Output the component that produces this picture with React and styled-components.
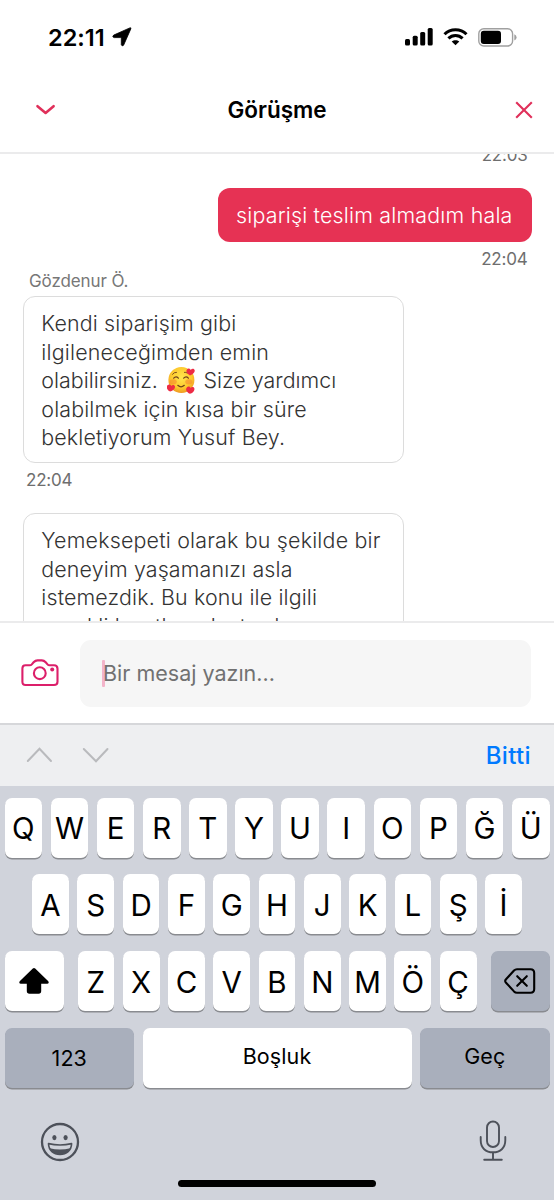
import React from 'react'
import styled, { createGlobalStyle } from 'styled-components'

const GlobalStyle = createGlobalStyle`
  * { box-sizing: border-box; }
  body {
    margin: 0;
    background: #fff;
    font-family: Inter, "Liberation Sans", sans-serif;
    font-feature-settings: "calt" 0;
  }
`

const Screen = styled.div`
  display: flex;
  flex-direction: column;
  width: 554px;
  height: 1200px;
  overflow: hidden;
  background: #fff;
`

const StatusBar = styled.div`
  display: flex;
  align-items: center;
  justify-content: space-between;
  height: 74px;
  padding: 0 37px 0 48px;
  flex: none;
`

const Clock = styled.div`
  display: flex;
  align-items: center;
  gap: 7.5px;
  font-size: 23.5px;
  font-weight: 600;
  letter-spacing: 0;
  color: #000;
`

const StatusIcons = styled.div`
  display: flex;
  align-items: center;
  gap: 10px;
`

const Header = styled.header`
  display: grid;
  grid-template-columns: 1fr auto 1fr;
  align-items: center;
  height: 80px;
  padding: 0 20px 7px;
  border-bottom: 2px solid #ebebec;
  flex: none;
`

const HeaderAction = styled.div`
  display: flex;
  justify-self: ${props => props.end ? 'end' : 'start'};
  padding-left: ${props => props.end ? 0 : '14px'};
`

const Title = styled.h1`
  margin: 0;
  font-size: 22.5px;
  font-weight: 600;
  letter-spacing: 0;
  color: #000;
`

const Chat = styled.main`
  display: flex;
  flex-direction: column;
  height: 467px;
  padding: 0 22.5px 0 23px;
  overflow: hidden;
  flex: none;
`

const Time = styled.div`
  align-self: ${props => props.mine ? 'flex-end' : 'flex-start'};
  height: 22px;
  margin: ${props => props.margin};
  font-size: 17px;
  line-height: 22px;
  letter-spacing: -0.2px;
  color: #6e6e6e;
`

const Sender = styled.div`
  height: 22px;
  margin: 0 0 4px 6px;
  font-size: 17px;
  line-height: 22px;
  letter-spacing: -0.1px;
  color: #777;
`

const Bubble = styled.div`
  align-self: ${props => props.mine ? 'flex-end' : 'flex-start'};
  width: ${props => props.mine ? '314px' : '381px'};
  padding: ${props => props.mine ? '13px 18.5px' : '12.6px 17.3px 10.4px'};
  border: ${props => props.mine ? 'none' : '1.5px solid #dcdcdc'};
  border-radius: 12px;
  background: ${props => props.mine ? '#e63254' : '#fff'};
  color: ${props => props.mine ? '#fff' : '#333'};
  font-size: 21.4px;
  font-weight: ${props => props.mine ? 300 : 350};
  line-height: 28.4px;
  flex: none;
`

const Line = styled.div`
  display: flex;
  align-items: center;
  height: 28.4px;
  white-space: pre;
  letter-spacing: ${props => props.spacing || '0.15px'};
`

const Composer = styled.div`
  display: flex;
  align-items: center;
  gap: 21px;
  height: 102px;
  padding: 0 23px 0 21px;
  border-top: 2px solid #ebebec;
  flex: none;
`

const Input = styled.div`
  display: flex;
  align-items: center;
  flex: 1;
  height: 67px;
  padding-left: 22px;
  border-radius: 11px;
  background: #f6f6f6;
  color: #717171;
  font-size: 21.5px;
`

const Caret = styled.span`
  width: 3px;
  height: 27px;
  margin-right: -2px;
  border-radius: 1px;
  background: #f3b4ca;
`

const Accessory = styled.div`
  display: flex;
  align-items: center;
  height: 63px;
  padding: 0 23px 1px 26px;
  border-top: 2px solid #d6d7da;
  background: #eeeff1;
  flex: none;
`

const Arrows = styled.div`
  display: flex;
  gap: 29px;
  flex: 1;
`

const Done = styled.div`
  color: #007aff;
  font-size: 24px;
  font-weight: 500;
  letter-spacing: 0.35px;
`

const Keyboard = styled.div`
  display: flex;
  flex-direction: column;
  gap: 16.8px;
  flex: 1;
  padding: 11.6px 4.5px 0;
  background: #d0d3db;
`

const KeyRow = styled.div`
  display: flex;
  gap: ${props => props.gap || '8.5px'};
  height: 60px;
  padding: ${props => props.inset ? '0 27.5px' : 0};
  flex: none;
`

const Letters = styled.div`
  display: flex;
  flex: 1;
  gap: 8.5px;
`

const Key = styled.div`
  display: flex;
  align-items: center;
  justify-content: center;
  flex: ${props => props.width ? 'none' : '1 1 0'};
  width: ${props => props.width || 'auto'};
  min-width: 0;
  height: 60px;
  padding-top: ${props => props.drop || 0};
  padding-bottom: ${props => props.lift || 0};
  border-radius: 7px;
  background: ${props => props.dark ? '#a9afbc' : '#fff'};
  box-shadow: 0 1.5px 0 #898b90;
  color: #000;
  font-size: ${props => props.word ? '21.5px' : '29.5px'};
  font-weight: 400;
  letter-spacing: ${props => props.word ? '0.1px' : 0};
`

const BottomBar = styled.div`
  display: flex;
  justify-content: space-between;
  align-items: flex-end;
  height: 42px;
  margin-top: 15.5px;
  padding: 0 42.5px 0 35.5px;
`

const HomeIndicator = styled.div`
  align-self: center;
  width: 198px;
  height: 7px;
  border-radius: 4px;
  margin-top: 1px;
  background: #000;
`

const LocationIcon = () => (
  <svg width="20" height="20" viewBox="0 0 20 20">
    <path d="M17.8.9Q19.4.3 18.8 1.9L11.6 18.2Q10.2 19.8 9.3 17.8V11.2Q9.3 10.6 8.7 10.6H2.2Q-.4 9.9 1.7 8.1Z" fill="#000" stroke="#000" strokeWidth=".8" />
  </svg>
)

const SignalIcon = () => (
  <svg width="28" height="18" viewBox="0 0 28 18">
    <rect x="0" y="11" width="5" height="6.5" rx="1.5" />
    <rect x="7.7" y="7.7" width="5" height="9.8" rx="1.5" />
    <rect x="15.2" y="4" width="5" height="13.5" rx="1.5" />
    <rect x="22.7" y="0" width="5" height="17.5" rx="1.5" />
  </svg>
)

const WifiIcon = () => (
  <svg width="25" height="18" viewBox="0 0 25 18" fill="none" stroke="#000" strokeWidth="3">
    <path d="M1.5 6.3C7.5.2 17.5.2 23.5 6.3" />
    <path d="M5.4 10.4C9.4 6.4 15.6 6.4 19.6 10.4" />
    <path d="M12.5 17.3 8.7 13.6C10.8 11.8 14.2 11.8 16.3 13.6Z" fill="#000" stroke="none" />
  </svg>
)

const BatteryIcon = () => (
  <svg width="39" height="19" viewBox="0 0 39 19">
    <rect x=".8" y=".8" width="33.8" height="17.2" rx="5" fill="none" stroke="#a0a0a0" strokeWidth="1.4" />
    <rect x="2.8" y="2.8" width="20.2" height="13.2" rx="3" fill="#000" />
    <path d="M36.3 6.3Q38.6 7.3 38.6 9.4T36.3 12.5Z" fill="#a0a0a0" />
  </svg>
)

const CollapseIcon = () => (
  <svg width="22" height="12" viewBox="0 0 22 12" fill="none" stroke="#e0305a" strokeWidth="2.6" strokeLinecap="round" strokeLinejoin="round">
    <path d="M3.5 2.2 11.6 8.9 19.6 2.2" />
  </svg>
)

const CloseIcon = () => (
  <svg width="20" height="20" viewBox="0 0 20 20" fill="none" stroke="#e0305a" strokeWidth="2.1">
    <path d="M2.2 2.2 17.8 17.8M17.8 2.2 2.2 17.8" />
  </svg>
)

const CameraIcon = () => (
  <svg width="38" height="28" viewBox="0 0 38 28" fill="none" stroke="#dc1f6a" strokeWidth="2.1" strokeLinejoin="round">
    <path d="M4.5 6.3H8.7Q10 6.3 10.8 5.4L12.6 3.3Q14.3 1.4 16.6 1.4H20.8Q23 1.4 24.7 3.3L26.5 5.4Q27.3 6.3 28.6 6.3H33Q36.5 6.3 36.5 9.8V22.7Q36.5 26 33 26H4.5Q1.4 26 1.4 22.7V9.5Q1.4 6.3 4.5 6.3Z" />
    <circle cx="18.8" cy="14.2" r="5.9" />
    <circle cx="31.2" cy="10.4" r="2" fill="#dc1f6a" stroke="none" />
  </svg>
)

const ArrowIcon = ({ down }) => (
  <svg width="27" height="16" viewBox="0 0 27 16" fill="none" stroke="#b9babd" strokeWidth="2" strokeLinecap="round">
    <path d={down ? 'M1.8 2 14 14.3 25.5 2' : 'M1.8 14 13.5 1.8 25 14'} />
  </svg>
)

const ShiftIcon = () => (
  <svg width="32" height="28" viewBox="0 0 32 28">
    <path d="M14.8 1.6Q16 .5 17.2 1.6L30.3 14.3Q31.5 16.4 29.2 16.7H23.2V24Q23.2 26.7 20.6 26.7H11.5Q8.8 26.7 8.8 24V16.7H2.8Q.5 16.4 1.7 14.3Z" fill="#000" />
  </svg>
)

const BackspaceIcon = () => (
  <svg width="32" height="26" viewBox="0 0 32 26" fill="none" stroke="#000" strokeWidth="2.1" strokeLinecap="round" strokeLinejoin="round">
    <path d="M13 1.2H26.5Q30.2 1.2 30.2 4.9V21Q30.2 24.7 26.5 24.7H13Q11.3 24.7 10 23.4L1.8 14.5Q.6 13 1.8 11.5L10 2.5Q11.3 1.2 13 1.2Z" />
    <path d="M13.2 8.2 22.8 17.8M22.8 8.2 13.2 17.8" />
  </svg>
)

const SmileyIcon = () => (
  <svg width="40" height="40" viewBox="0 0 40 40" fill="none" stroke="#4d515a">
    <circle cx="20" cy="20" r="18" strokeWidth="2.3" />
    <ellipse cx="14.4" cy="15.6" rx="2.1" ry="2.6" fill="#4d515a" stroke="none" />
    <ellipse cx="25.6" cy="15.6" rx="2.1" ry="2.6" fill="#4d515a" stroke="none" />
    <path d="M8.5 21.6Q20 24.4 31.6 21.6C31.3 28.5 26.5 32.4 20 32.4S8.8 28.5 8.5 21.6Z" strokeWidth="1.6" strokeLinejoin="round" />
    <path d="M9.6 26.2Q20 28.8 30.4 26.2C28.3 30.6 24.8 32.4 20 32.4S11.7 30.6 9.6 26.2Z" fill="#4d515a" stroke="none" />
  </svg>
)

const MicIcon = () => (
  <svg width="28" height="42" viewBox="0 0 28 42" fill="none" stroke="#4d515a" strokeWidth="1.9" strokeLinecap="round">
    <rect x="8" y="1.5" width="12" height="25.5" rx="6" />
    <path d="M1.7 17V20.3C1.7 28 6.8 32.3 14 32.3S26.3 28 26.3 20.3V17M14 32.3V39.4M5.2 39.8H22.8" />
  </svg>
)

const LoveEmoji = () => (
  <svg width="28" height="28" viewBox="0 0 28 28">
    <defs>
      <radialGradient id="face" cx=".5" cy=".4" r=".62">
        <stop offset="0" stopColor="#ffe64e" />
        <stop offset=".65" stopColor="#fdc92d" />
        <stop offset="1" stopColor="#ed9420" />
      </radialGradient>
    </defs>
    <circle cx="14.4" cy="14" r="13" fill="url(#face)" />
    <ellipse cx="6.2" cy="15.8" rx="3.6" ry="2.6" fill="#f5832f" opacity=".55" />
    <ellipse cx="21.8" cy="15.8" rx="3.6" ry="2.6" fill="#f5832f" opacity=".55" />
    <g fill="none" stroke="#70401b" strokeWidth="1.2" strokeLinecap="round">
      <path d="M5.5 8.3Q7 6 9.5 6.3M17.4 6.3Q19 6 20.2 7" strokeWidth=".9" />
      <path d="M6.7 12.2Q9 9.6 11.4 12.2M16.7 12.2Q19 9.6 21.4 12.2" />
      <path d="M10.8 19.3Q14 22.3 17.3 19.3" />
    </g>
    <g fill="#ed2b45">
      <path d="M23 9.5C19.2 7.5 18.8 4.8 20 3.4 21.2 2 23 2.6 23.7 4 25 2.2 27 2.5 27.6 4 28.3 6 26.5 8.3 23 9.5Z" />
      <path d="M3.2 25.5C-.2 24-1 20.9.5 19.3 2 17.9 3.7 18.5 4.2 20 5.5 18.4 7.3 18.8 7.9 20.3 8.5 22.3 6.6 24.6 3.2 25.5Z" />
      <path d="M23 27.8C19.1 26 18.4 23 19.8 21.4 21.2 20 23 20.6 23.5 22 24.8 20.4 26.9 20.8 27.4 22.4 27.9 24.5 26.2 26.8 23 27.8Z" />
    </g>
  </svg>
)

const EmojiSlot = styled.span`
  display: flex;
  width: 28px;
  margin: 0 8.5px 0 9px;
`

const topRow = ['Q', 'W', 'E', 'R', 'T', 'Y', 'U', 'I', 'O', 'P', 'Ğ', 'Ü']
const homeRow = ['A', 'S', 'D', 'F', 'G', 'H', 'J', 'K', 'L', 'Ş', 'İ']
const bottomRow = ['Z', 'X', 'C', 'V', 'B', 'N', 'M', 'Ö', 'Ç']

const renderKeys = keys => keys.map(k => <Key key={k} drop="1.5px">{k}</Key>)

function App() {
  return (
    <Screen>
      <GlobalStyle />
      <StatusBar>
        <Clock><span>22:11</span><LocationIcon /></Clock>
        <StatusIcons>
          <SignalIcon />
          <WifiIcon />
          <BatteryIcon />
        </StatusIcons>
      </StatusBar>
      <Header>
        <HeaderAction><CollapseIcon /></HeaderAction>
        <Title>Görüşme</Title>
        <HeaderAction end><CloseIcon /></HeaderAction>
      </Header>

      <Chat>
        <Time mine margin="-10px 4px 21.5px 0">22:03</Time>
        <Bubble mine>
          <Line spacing="0.2px">siparişi teslim almadım hala</Line>
        </Bubble>
        <Time mine margin="6px 4px 0 0">22:04</Time>
        <Sender>Gözdenur Ö.</Sender>
        <Bubble>
          <Line>Kendi siparişim gibi</Line>
          <Line spacing="0.2px">ilgileneceğimden emin</Line>
          <Line spacing="0.03px">olabilirsiniz.<EmojiSlot><LoveEmoji /></EmojiSlot>Size yardımcı</Line>
          <Line>olabilmek için kısa bir süre</Line>
          <Line>bekletiyorum Yusuf Bey.</Line>
        </Bubble>
        <Time margin="6.5px 0 21.5px 3px">22:04</Time>
        <Bubble>
          <Line spacing="0.2px">Yemeksepeti olarak bu şekilde bir</Line>
          <Line>deneyim yaşamanızı asla</Line>
          <Line>istemezdik. Bu konu ile ilgili</Line>
          <Line>gerekli kayıtları oluşturdum</Line>
        </Bubble>
      </Chat>

      <Composer>
        <CameraIcon />
        <Input><Caret />Bir mesaj yazın...</Input>
      </Composer>

      <Accessory>
        <Arrows>
          <ArrowIcon />
          <ArrowIcon down />
        </Arrows>
        <Done>Bitti</Done>
      </Accessory>
      <Keyboard>
        <KeyRow>{renderKeys(topRow)}</KeyRow>
        <KeyRow inset>{renderKeys(homeRow)}</KeyRow>
        <KeyRow gap="14px">
          <Key width="59px"><ShiftIcon /></Key>
          <Letters>{renderKeys(bottomRow)}</Letters>
          <Key width="59px" dark><BackspaceIcon /></Key>
        </KeyRow>
        <KeyRow>
          <Key width="129.5px" dark word>123</Key>
          <Key word lift="4px">Boşluk</Key>
          <Key width="129.5px" dark word lift="4px">Geç</Key>
        </KeyRow>
        <BottomBar>
          <SmileyIcon />
          <MicIcon />
        </BottomBar>
        <HomeIndicator />
      </Keyboard>
    </Screen>
  )
}

export default App
